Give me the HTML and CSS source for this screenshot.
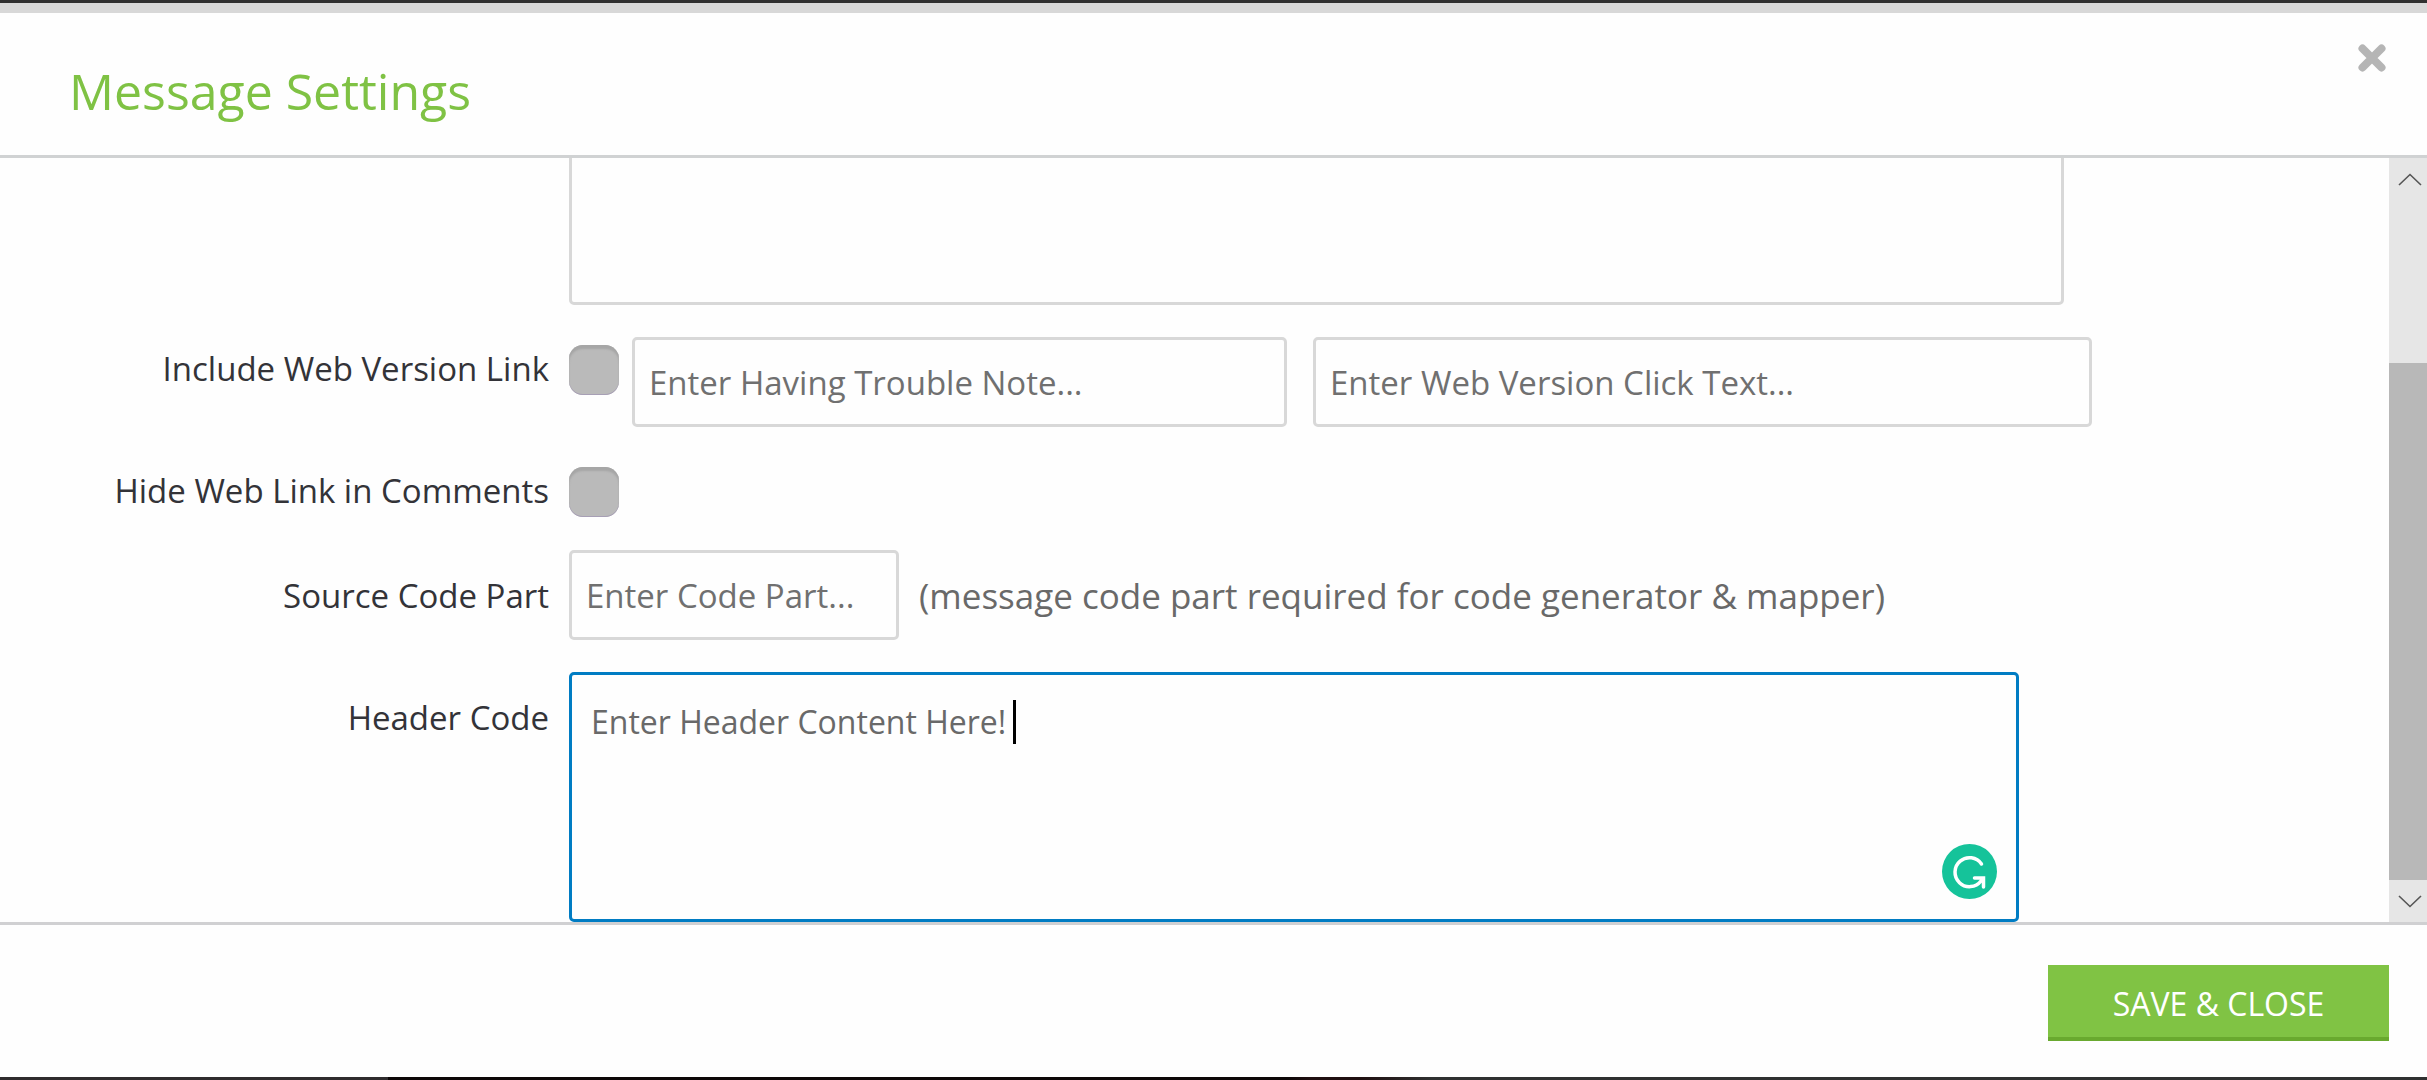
FILE: index.html
```html
<!DOCTYPE html>
<html lang="en">
<head>
<meta charset="utf-8">
<title>Message Settings</title>
<link rel="stylesheet" href="styles.css">
</head>
<body>
<main class="dialog">
  <header class="dialog-header">
    <h1 class="dialog-title">Message Settings</h1>
    <button class="close" type="button" aria-label="Close">
      <svg width="28" height="28" viewBox="0 0 28 28"><path d="M4.500 4.500 23.500 23.500M23.500 4.500 4.500 23.500" stroke="#b5b5b5" stroke-width="8" stroke-linecap="round"/></svg>
    </button>
  </header>

  <div class="dialog-body">
    <form class="form" id="settings">
      <div class="row">
        <span class="label"></span>
        <textarea class="field notes" aria-label="Notes"></textarea>
      </div>
      <div class="row">
        <label class="label label-check" for="web-link">Include Web Version Link</label>
        <input class="check" type="checkbox" id="web-link">
        <div class="pair">
          <input class="field" type="text" aria-label="Having trouble note" placeholder="Enter Having Trouble Note...">
          <input class="field" type="text" aria-label="Web version click text" placeholder="Enter Web Version Click Text...">
        </div>
      </div>
      <div class="row row-check">
        <label class="label label-check" for="hide-link">Hide Web Link in Comments</label>
        <input class="check" type="checkbox" id="hide-link">
      </div>
      <div class="row">
        <label class="label" for="code-part">Source Code Part</label>
        <input class="field code-part" type="text" id="code-part" placeholder="Enter Code Part...">
        <span class="hint">(message code part required for code generator &amp; mapper)</span>
      </div>
      <div class="row">
        <label class="label" for="header-code">Header Code</label>
        <div class="editor">
          <textarea class="field header-code" id="header-code" spellcheck="false">Enter Header Content Here!</textarea>
          <span class="caret"></span>
          <svg class="assistant" width="55" height="55" viewBox="0 0 55 55"><circle cx="27.500" cy="27.500" r="27.500" fill="#15c39a"/><path d="M39.500 20A14.500 14.500 0 1 0 39 37L41 34.500M32.500 34H41.500V43" fill="none" stroke="#fff" stroke-width="3.500" stroke-linecap="round" stroke-linejoin="miter"/></svg>
        </div>
      </div>
    </form>
    <div class="scrollbar">
      <button class="scroll-button" type="button" aria-label="Scroll up"><svg width="24" height="13" viewBox="0 0 24 13"><path d="M1 12 12 1.500 23 12" fill="none" stroke="#555" stroke-width="1.600"/></svg></button>
      <div class="track"><div class="thumb"></div></div>
      <button class="scroll-button" type="button" aria-label="Scroll down"><svg width="24" height="13" viewBox="0 0 24 13"><path d="M1 1 12 11.500 23 1" fill="none" stroke="#555" stroke-width="1.600"/></svg></button>
    </div>
  </div>

  <footer class="dialog-footer">
    <button class="save" type="submit" form="settings">SAVE &amp; CLOSE</button>
  </footer>
  <div class="backdrop-edge"></div>
</main>
</body>
</html>
```
FILE: styles.css
```css
* {
  box-sizing: border-box;
}

body {
  margin: 0;
  font: 33px/48px "Open Sans", "Noto Sans", sans-serif;
  color: #333338;
}

button,
input,
textarea {
  margin: 0;
  font: inherit;
}

.dialog {
  display: flex;
  flex-direction: column;
  height: 100vh;
  border-top: 3px solid #303030;
  background: #fefefe;
}

.dialog-header {
  display: flex;
  justify-content: space-between;
  align-items: flex-start;
  flex: none;
  height: 155px;
  padding: 31px 41px 0 69px;
  border-top: 10px solid #d8d8d8;
  border-bottom: 3px solid #d0d2d3;
}

.dialog-title {
  margin: 13px 0 0;
  font-size: 50px;
  line-height: 68px;
  font-weight: 400;
  color: #7fc244;
}

.close {
  display: flex;
  padding: 0;
  border: 0;
  background: none;
}

.dialog-body {
  display: flex;
  flex: 1;
  min-height: 0;
  overflow: hidden;
}

.form {
  display: flex;
  flex: 1;
  flex-direction: column;
  justify-content: flex-end;
  gap: 32px;
  min-width: 0;
  padding-right: 297px;
}

.row {
  display: flex;
  align-items: flex-start;
  flex: none;
}

.row-check {
  min-height: 59px;
}

.label {
  flex: none;
  width: 549px;
  margin-right: 20px;
  padding-top: 22px;
  text-align: right;
}

.label-check {
  padding-top: 8px;
}

.field {
  height: 90px;
  padding: 0 14px;
  border: 3px solid #d8d8d8;
  border-radius: 5px;
  outline: 0;
  background: #fefefe;
  color: #696969;
  resize: none;
}

.field::placeholder {
  color: #707070;
  opacity: 1;
}

.notes {
  flex: 1;
  height: 250px;
  margin-right: 28px;
}

.check {
  appearance: none;
  flex: none;
  width: 50px;
  height: 50px;
  margin: 8px 13px 0 0;
  border-radius: 14px;
  background: #bababa;
  box-shadow: inset 0 4px 2px #a6a6a6, inset 0 -1px 0 #a79fb5;
}

.pair {
  display: grid;
  flex: 1;
  grid-template-columns: minmax(0, 655fr) minmax(0, 779fr);
  gap: 26px;
  min-width: 0;
}

.code-part {
  width: 330px;
}

.hint {
  padding: 22px 0 0 20px;
  font-size: 35px;
  white-space: nowrap;
  color: #696969;
}

.editor {
  position: relative;
  display: flex;
  flex: 1;
  margin-right: 73px;
}

.header-code {
  flex: 1;
  height: 250px;
  padding: 23px 19px;
  border-color: #007cc3;
  font-size: 32px;
}

.caret {
  position: absolute;
  top: 28px;
  left: 444px;
  width: 3px;
  height: 44px;
  background: #000;
}

.assistant {
  position: absolute;
  right: 22px;
  bottom: 23px;
}

.scrollbar {
  display: flex;
  flex: none;
  flex-direction: column;
  width: 38px;
  background: #e6e6e6;
}

.scroll-button {
  display: flex;
  align-items: center;
  justify-content: center;
  flex: none;
  height: 42px;
  padding: 0 0 0 4px;
  border: 0;
  background: none;
}

.track {
  display: flex;
  flex: 1;
  flex-direction: column;
  justify-content: flex-end;
}

.thumb {
  height: 76%;
  background: #b8b8b8;
}

.dialog-footer {
  display: flex;
  align-items: flex-start;
  justify-content: flex-end;
  flex: none;
  height: 155px;
  padding: 40px 38px 0 0;
  border-top: 3px solid #d0d0d2;
}

.save {
  width: 341px;
  height: 76px;
  padding: 6px 0 0;
  border: 0;
  border-bottom: 4px solid #69a92f;
  background: #80c344;
  color: #fff;
  font-size: 32px;
}

.backdrop-edge {
  flex: none;
  height: 3px;
  background: linear-gradient(90deg, #2f2c2d 16%, #0c0707 16%, #0c0707 53%, #1f0f10 54%, #1f0f10 56%, #2f3030 59%);
}
```
